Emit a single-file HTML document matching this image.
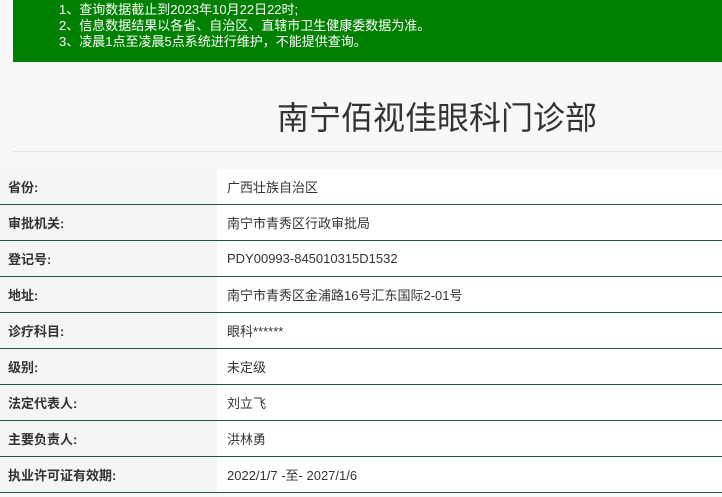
<!DOCTYPE html><html><head><meta charset="utf-8"><style>
body{margin:0;width:722px;height:497px;overflow:hidden;background:#f8f8f8;font-family:"Liberation Sans","Noto Sans CJK SC",sans-serif;}
.ban{position:absolute;left:13px;top:0;width:709px;height:62px;background:#008000;color:#fff;font-size:13px;line-height:16px;}
.ban div{padding-left:46px}
h1{position:absolute;left:217px;width:440px;top:96px;margin:0;text-align:center;font-weight:normal;font-size:32px;color:#333;line-height:44px}
.hr{position:absolute;left:13px;right:0;top:151px;border-top:1px solid #e5e5e5}
table{position:absolute;left:0;top:169px;width:722px;border-collapse:collapse;font-size:13px;color:#333}
td{height:35px;border-bottom:1px solid #1d5a3a;padding:0}
td.l{width:209px;padding-left:8px;font-weight:bold;background:#f5f5f5}
td.v{padding-left:10px;background:#fff}
</style></head><body>
<div class="ban"><div style="padding-top:2px">1、查询数据截止到2023年10月22日22时;</div><div>2、信息数据结果以各省、自治区、直辖市卫生健康委数据为准。</div><div>3、凌晨1点至凌晨5点系统进行维护，不能提供查询。</div></div>
<h1>南宁佰视佳眼科门诊部</h1><div class="hr"></div>
<table>
<tr><td class="l">省份:</td><td class="v">广西壮族自治区</td></tr>
<tr><td class="l">审批机关:</td><td class="v">南宁市青秀区行政审批局</td></tr>
<tr><td class="l">登记号:</td><td class="v">PDY00993-845010315D1532</td></tr>
<tr><td class="l">地址:</td><td class="v">南宁市青秀区金浦路16号汇东国际2-01号</td></tr>
<tr><td class="l">诊疗科目:</td><td class="v">眼科******</td></tr>
<tr><td class="l">级别:</td><td class="v">未定级</td></tr>
<tr><td class="l">法定代表人:</td><td class="v">刘立飞</td></tr>
<tr><td class="l">主要负责人:</td><td class="v">洪林勇</td></tr>
<tr><td class="l">执业许可证有效期:</td><td class="v">2022/1/7 -至- 2027/1/6</td></tr>
</table>
</body></html>
